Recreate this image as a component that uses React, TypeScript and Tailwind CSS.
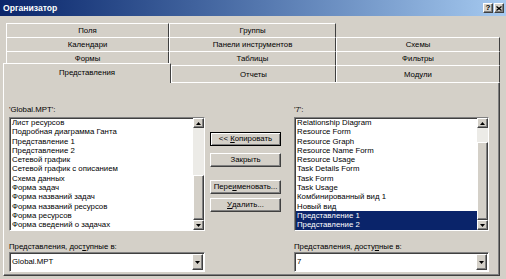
import React from 'react';

const leftItems = [
  'Лист ресурсов',
  'Подробная диаграмма Ганта',
  'Представление 1',
  'Представление 2',
  'Сетевой график',
  'Сетевой график с описанием',
  'Схема данных',
  'Форма задач',
  'Форма названий задач',
  'Форма названий ресурсов',
  'Форма ресурсов',
  'Форма сведений о задачах',
];

const rightItems = [
  'Relationship Diagram',
  'Resource Form',
  'Resource Graph',
  'Resource Name Form',
  'Resource Usage',
  'Task Details Form',
  'Task Form',
  'Task Usage',
  'Комбинированный вид 1',
  'Новый вид',
  'Представление 1',
  'Представление 2',
];

const raised =
  'border border-t-white border-l-white border-r-[#404040] border-b-[#404040] bg-[#d4d0c8] shadow-[inset_-1px_-1px_0_#808080]';
const sunken =
  'border border-t-[#808080] border-l-[#808080] border-r-white border-b-white bg-white shadow-[inset_1px_1px_0_#404040]';

function ArrowBox({ up }: { up?: boolean }) {
  return (
    <div className={`flex h-[10px] w-full shrink-0 items-center justify-center ${raised}`}>
      <svg width="5" height="3" viewBox="0 0 5 3">
        <polygon points={up ? '2.5,0 5,3 0,3' : '0,0 5,0 2.5,3'} fill="#000" />
      </svg>
    </div>
  );
}

function Scrollbar({ gap, thumb }: { gap: string; thumb: string }) {
  return (
    <div className="flex w-[11px] shrink-0 flex-col">
      <ArrowBox up />
      <div className="flex flex-1 flex-col bg-[#ecebe7]">
        <div className={gap} />
        <div className={`${thumb} ${raised}`} />
        <div className="flex-1" />
      </div>
      <ArrowBox />
    </div>
  );
}

function ListBox({ items, selected, gap, thumb }: { items: string[]; selected: number[]; gap: string; thumb: string }) {
  return (
    <div className={`mt-[2px] flex h-[114px] ${sunken}`}>
      <div className="flex-1 overflow-hidden pl-[1px]">
        {items.map((item, i) => (
          <div
            key={i}
            className={`h-[9.3px] whitespace-nowrap px-[1px] leading-[9.3px] ${
              selected.includes(i) ? 'bg-[#0a246a] text-white' : 'text-black'
            }`}
          >
            {item}
          </div>
        ))}
      </div>
      <Scrollbar gap={gap} thumb={thumb} />
    </div>
  );
}

function Combo({ value }: { value: string }) {
  return (
    <div className={`flex h-[20px] items-center pl-[2px] pr-[1px] ${sunken}`}>
      <span className="flex-1">{value}</span>
      <div className={`flex h-[16px] w-[11px] items-center justify-center ${raised}`}>
        <svg width="5" height="3" viewBox="0 0 5 3">
          <polygon points="0,0 5,0 2.5,3" fill="#000" />
        </svg>
      </div>
    </div>
  );
}

function Btn({ children, def, className }: { children: React.ReactNode; def?: boolean; className?: string }) {
  return (
    <div
      className={`flex h-[14px] items-center justify-center whitespace-pre ${
        def
          ? 'border border-black bg-[#d4d0c8] shadow-[inset_1px_1px_0_#fff,inset_-1px_-1px_0_#808080]'
          : raised
      } ${className ?? ''}`}
    >
      {children}
    </div>
  );
}

const tab =
  'flex items-center justify-center pt-[1px] border-t border-l border-r border-t-white border-l-white border-r-[#404040]';

export default function App() {
  return (
    <div className="h-[279px] w-[506px] overflow-hidden bg-[#d4d0c8] font-['Liberation_Sans',Arial,sans-serif] text-[7.8px] text-black">
      {/* Title bar */}
      <div className="flex h-[16px] items-center justify-between bg-gradient-to-r from-[#0a246a] to-[#a6caf0] pl-[3px] pr-[2px]">
        <span className="text-[8.6px] font-bold text-white">Организатор</span>
        <div className="flex gap-[1px]">
          <div className={`flex h-[10px] w-[10px] items-center justify-center text-[8px] font-bold leading-none ${raised}`}>?</div>
          <div className={`flex h-[10px] w-[10px] items-center justify-center ${raised}`}>
            <svg width="6" height="5" viewBox="0 0 6 5">
              <path d="M0.5 0.5 L5.5 4.5 M5.5 0.5 L0.5 4.5" stroke="#000" strokeWidth="1.3" />
            </svg>
          </div>
        </div>
      </div>

      {/* Tabs */}
      <div className="mt-[7px]">
        <div className="flex h-[14px] pl-[6px]">
          <div className={`${tab} w-[163px]`}>Поля</div>
          <div className={`${tab} w-[167px]`}>Группы</div>
        </div>
        <div className="flex h-[14px] pl-[6px]">
          <div className={`${tab} w-[163px]`}>Календари</div>
          <div className={`${tab} w-[167px]`}>Панели инструментов</div>
          <div className={`${tab} w-[164px]`}>Схемы</div>
        </div>
        <div className="flex h-[14px] pl-[6px]">
          <div className={`${tab} w-[163px]`}>Формы</div>
          <div className={`${tab} w-[167px]`}>Таблицы</div>
          <div className={`${tab} w-[164px]`}>Фильтры</div>
        </div>
        <div className="flex h-[17px] items-end pl-[3px]">
          <div className={`${tab} relative z-10 -mb-px h-[20px] w-[168px] bg-[#d4d0c8] pb-[2px]`}>Представления</div>
          <div className={`${tab} h-[17px] w-[165px]`}>Отчеты</div>
          <div className={`${tab} h-[17px] w-[164px]`}>Модули</div>
        </div>
      </div>

      {/* Panel */}
      <div className="ml-[3px] h-[194px] w-[497px] border border-t-white border-l-white border-r-[#404040] border-b-[#404040] shadow-[inset_-1px_-1px_0_#808080]">
        <div className="flex pt-[22px] pl-[5px]">
          <div className="w-[196px]">
            <div className="h-[10px] leading-[10px]">'Global.MPT':</div>
            <ListBox items={leftItems} selected={[]} gap="h-[47px]" thumb="h-[45px]" />
            <div className="mt-[11px] h-[10px] leading-[10px]">
              Представления, дос<u>т</u>упные в:
            </div>
            <Combo value="Global.MPT" />
          </div>

          <div className="ml-[5px] flex w-[71px] flex-col pt-[27px]">
            <Btn def>
              {'<< '}
              <u>К</u>опировать
            </Btn>
            <Btn className="mt-[7px]">Закрыть</Btn>
            <Btn className="mt-[13px]">
              Пере<u>и</u>меновать...
            </Btn>
            <Btn className="mt-[4px]">
              <u>У</u>далить...
            </Btn>
          </div>

          <div className="ml-[13px] w-[195px]">
            <div className="h-[10px] leading-[10px]">'7':</div>
            <ListBox items={rightItems} selected={[10, 11]} gap="h-[14px]" thumb="h-[78px]" />
            <div className="mt-[11px] h-[10px] leading-[10px]">
              Представления, досту<u>п</u>ные в:
            </div>
            <Combo value="7" />
          </div>
        </div>
      </div>
    </div>
  );
}
